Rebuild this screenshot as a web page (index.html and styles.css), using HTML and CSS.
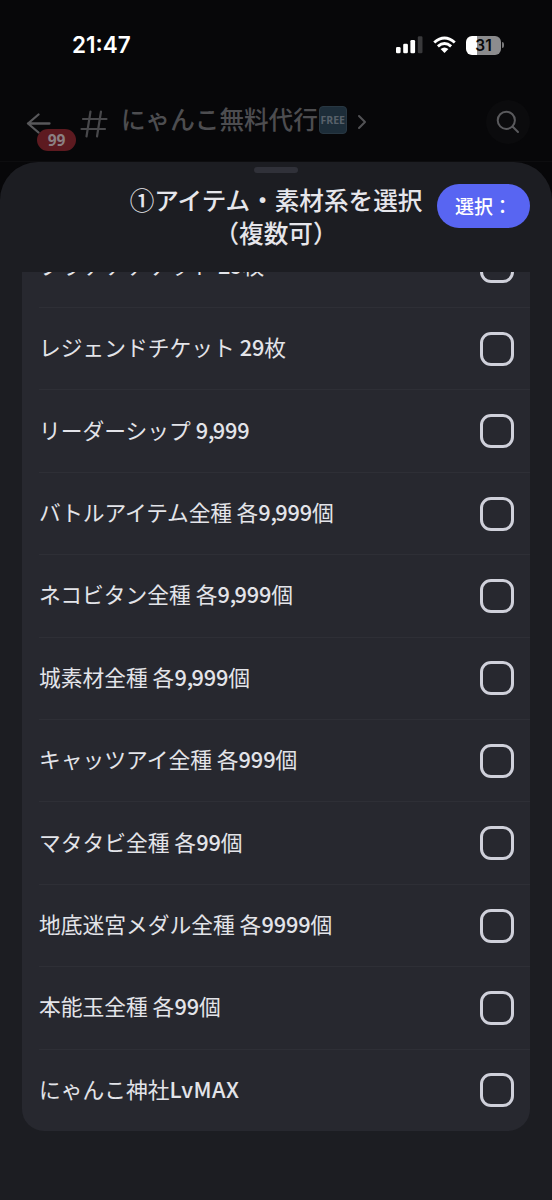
FILE: index.html
```html
<!DOCTYPE html>
<html lang="ja">
<head>
<meta charset="utf-8">
<title>アイテム・素材系を選択</title>
<link rel="stylesheet" href="styles.css">
</head>
<body>
<div class="screen">
  <div class="status">
    <span class="clock">21:47</span>
    <div class="indicators">
      <svg class="signal" width="27" height="18" viewBox="0 0 27 18"><g fill="#fff"><rect x="0" y="11" width="4.6" height="6.3" rx="1.3"/><rect x="7.2" y="7.8" width="4.7" height="9.5" rx="1.3"/><rect x="14.4" y="4" width="4.7" height="13.3" rx="1.3"/></g><rect x="21.8" y="0.2" width="4.7" height="17.1" rx="1.3" fill="#39393b"/></svg>
      <svg class="wifi" width="23" height="18" viewBox="0 0 24 18"><g fill="none" stroke="#fff" stroke-width="3.1"><path d="M1.3 6.4Q12-3 22.7 6.4"/><path d="M5.1 10.4Q12 4.4 18.9 10.4"/></g><path d="M12 17.4L7.9 13.3Q12 10 16.1 13.3Z" fill="#fff"/></svg>
      <div class="battery"><span>31</span></div><i class="battery-tip"></i>
    </div>
  </div>
  <div class="channel">
    <div class="back">
      <svg width="26" height="22" viewBox="0 0 26 22" fill="none" stroke="#58585b" stroke-width="2.3" stroke-linecap="round" stroke-linejoin="round"><path d="M23.500 11.500H2M12.500 2.500L2 11.500L12.500 20.500"/></svg>
      <span class="unread">99</span>
    </div>
    <svg class="hash" width="28" height="28" viewBox="0 0 28 28" fill="none" stroke="#48484b" stroke-width="2.2" stroke-linecap="round"><path d="M10.500 1.500L6.500 26.500M21 1.500L17 26.500M3 9H26.500M1.500 19H25"/></svg>
    <span class="name">にゃんこ無料代行</span>
    <span class="free">FREE</span>
    <svg class="chevron" width="10" height="16" viewBox="0 0 10 16" fill="none" stroke="#525255" stroke-width="2" stroke-linecap="round" stroke-linejoin="round"><path d="M2 2L8 8L2 14"/></svg>
    <div class="search"><svg width="24" height="24" viewBox="0 0 24 24" fill="none" stroke="#5a5a5d" stroke-width="2" stroke-linecap="round"><circle cx="10.300" cy="10.300" r="8.600"/><path d="M16.500 16.500L22 22"/></svg></div>
  </div>
  <main class="sheet">
    <i class="handle"></i>
    <header>
      <h1>①アイテム・素材系を選択<br><span class="paren">（</span>複数可<span class="paren close">）</span></h1>
      <button>選択：</button>
    </header>
    <div class="viewport">
      <ul class="list">
        <li><span>プラチナチケット <b>29</b>枚</span><i class="box"></i></li>
        <li><span>レジェンドチケット <b>29</b>枚</span><i class="box"></i></li>
        <li><span>リーダーシップ <b>9<s>,</s>999</b></span><i class="box"></i></li>
        <li><span class="snug">バトルアイテム全種 各<b>9<s>,</s>999</b>個</span><i class="box"></i></li>
        <li><span>ネコビタン全種 各<b>9<s>,</s>999</b>個</span><i class="box"></i></li>
        <li><span>城素材全種 各<b>9<s>,</s>999</b>個</span><i class="box"></i></li>
        <li><span>キャッツアイ全種 各<b>999</b>個</span><i class="box"></i></li>
        <li><span>マタタビ全種 各<b>99</b>個</span><i class="box"></i></li>
        <li><span>地底迷宮メダル全種 各<b>9999</b>個</span><i class="box"></i></li>
        <li><span>本能玉全種 各<b>99</b>個</span><i class="box"></i></li>
        <li><span>にゃんこ神社<b class="word">LvMAX</b></span><i class="box"></i></li>
      </ul>
    </div>
  </main>
</div>
</body>
</html>
```
FILE: styles.css
```css
* { box-sizing: border-box; }
body { margin: 0; background: #070709; font-family: "Noto Sans CJK JP", sans-serif; }
.screen { width: 552px; height: 1200px; overflow: hidden; display: flex; flex-direction: column; background: #070709; }
.status { height: 88px; flex: none; display: flex; justify-content: space-between; align-items: center; padding: 2px 49px 0 72px; }
.clock { font: 600 22.5px/28px Inter, sans-serif; color: #fff; }
.indicators { display: flex; align-items: center; }
.wifi { margin-left: 10px; }
.battery { margin-left: 10px; width: 35px; height: 19px; border-radius: 6px; background: linear-gradient(90deg, #fff 11px, #8c8c8e 11px); font: 600 15.5px/20px Inter, sans-serif; color: #08080a; text-align: center; }
.battery-tip { width: 2px; height: 6px; margin: 0 -1px 0 1px; border-radius: 0 3px 3px 0; background: #777779; }
.channel { height: 74px; flex: none; display: flex; align-items: center; padding: 0 22px 5px 26px; border-bottom: 1px solid #0d0d0f; }
.back { position: relative; height: 22px; width: 26px; margin-top: 1px; }
.back svg { display: block; }
.unread { position: absolute; left: 11px; top: 17px; width: 39px; height: 22px; border-radius: 11px; background: #5d1a20; color: #8b8083; font: 700 15.5px/22px "Noto Sans", sans-serif; text-align: center; }
.hash { margin: 3px 0 0 28px; }
.name { margin: -8px 0 0 13px; font-size: 24.600px; line-height: 36px; font-weight: 500; color: #4d4d50; white-space: nowrap; }
.free { margin: -5px 0 0 1px; width: 28px; height: 28px; flex: none; border-radius: 4px; background: #1d2d39; color: #58616a; font: 700 10.5px/26px "Open Sans", sans-serif; text-align: center; border: 1px solid #283742; }
.chevron { margin-left: 10px; }
.search { margin-left: auto; width: 44px; height: 44px; border-radius: 50%; background: #0b0b0d; display: flex; align-items: center; justify-content: center; }
.sheet { flex: 1; min-height: 0; background: #1c1d22; border-radius: 38px 38px 0 0; display: flex; flex-direction: column; }
.handle { width: 44px; height: 6px; flex: none; border-radius: 3px; background: #303139; margin: 5px auto 0; }
header { height: 99px; flex: none; display: grid; grid-template-columns: 115px 322px 93px 22px; align-items: start; padding-top: 11px; }
h1 { grid-column: 2; margin: -1px 0 0; font-size: 24.600px; line-height: 33px; font-weight: 500; color: #e6e6eb; text-align: center; white-space: nowrap; }
.paren { margin-left: -12px; }
.paren.close { margin-left: 0; margin-right: -12px; }
button { grid-column: 3; height: 44px; border: 0; border-radius: 22px; padding: 0 0 1px; background: #5865f2; color: #fff; font: 500 19px/43px "Noto Sans CJK JP", sans-serif; white-space: nowrap; }
.viewport { height: 859px; flex: none; margin: 0 22px; overflow: hidden; display: flex; flex-direction: column; justify-content: flex-end; border-radius: 0 0 22px 22px; background: #27282f; }
.list { margin: 0; padding: 0 0 0 17px; list-style: none; flex: none; }
li { height: 82.4px; display: flex; align-items: center; justify-content: space-between; padding-right: 16px; border-top: 1px solid #2e2f36; color: #e3e4e9; font-size: 21.750px; line-height: 32px; white-space: nowrap; }
li > span { margin-top: -3px; }
.snug { letter-spacing: -0.15px; }
b { font-weight: 500; letter-spacing: -0.1px; }
s { text-decoration: none; letter-spacing: -1.8px; }
.word { letter-spacing: 0.5px; }
.box { width: 34px; height: 34px; flex: none; border: 3px solid #cfd0da; border-radius: 11px; }
```
